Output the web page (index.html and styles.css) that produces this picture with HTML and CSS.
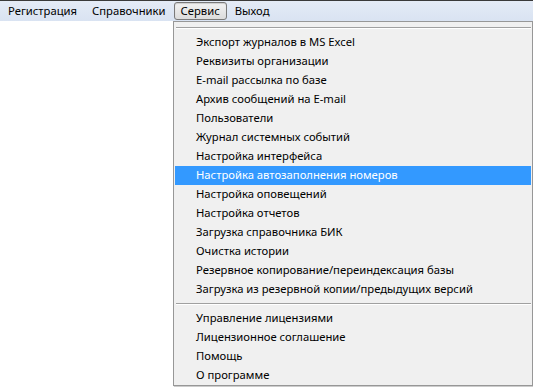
FILE: index.html
```html
<!DOCTYPE html>
<html lang="ru">
<head>
    <meta charset="UTF-8">
    <title>Сервис</title>
    <link rel="stylesheet" href="styles.css">
</head>
<body>
    <div class="menubar">
        <span class="menu-item">Регистрация</span>
        <span class="menu-item">Справочники</span>
        <span class="menu-item active">Сервис</span>
        <span class="menu-item">Выход</span>
    </div>

    <div class="dropdown">
        <div class="sep top"></div>
        <div class="row">Экспорт журналов в MS Excel</div>
        <div class="row">Реквизиты организации</div>
        <div class="row">E-mail рассылка по базе</div>
        <div class="row">Архив сообщений на E-mail</div>
        <div class="row">Пользователи</div>
        <div class="row">Журнал системных событий</div>
        <div class="row">Настройка интерфейса</div>
        <div class="row selected">Настройка автозаполнения номеров</div>
        <div class="row">Настройка оповещений</div>
        <div class="row">Настройка отчетов</div>
        <div class="row">Загрузка справочника БИК</div>
        <div class="row">Очистка истории</div>
        <div class="row">Резервное копирование/переиндексация базы</div>
        <div class="row">Загрузка из резервной копии/предыдущих версий</div>
        <div class="sep"></div>
        <div class="row">Управление лицензиями</div>
        <div class="row">Лицензионное соглашение</div>
        <div class="row">Помощь</div>
        <div class="row">О программе</div>
    </div>
</body>
</html>
```

FILE: styles.css
```css
body {
    margin: 0;
    font-family: 'Noto Sans', 'Open Sans', sans-serif;
    font-size: 11.25px;
    color: #000;
    background: #fff;
    width: 533px;
    height: 387px;
    overflow: hidden;
}
.menubar {
    display: flex;
    align-items: center;
    height: 20px;
    padding-left: 1px;
    border-top: 1px solid #3a3a3a;
    background: linear-gradient(#e4ebf6, #d9e3f2);
}
.menu-item {
    padding: 0 6px;
    line-height: 16px;
    border: 1px solid transparent;
    border-radius: 3px;
    margin-right: 1px;
}
.menu-item.active {
    border-color: #7a7a7a;
    background: linear-gradient(#f2f2f2, #dcdcdc);
    box-shadow: inset 0 1px 1px rgba(0, 0, 0, 0.15);
}
.dropdown {
    margin-left: 173px;
    width: 356px;
    padding: 5px 1px 0 1px;
    border: 1px solid #979797;
    background: #f0f0f0;
    box-shadow: 1px 1px 1px rgba(0, 0, 0, 0.2);
}
.sep {
    height: 0;
    margin: 4px 0 4px 1px;
    border-top: 1px solid #a0a0a0;
    border-bottom: 1px solid #fff;
}
.sep.top {
    margin: 0 0 4px 1px;
}
.row {
    height: 19px;
    line-height: 18px;
    padding-left: 21px;
    white-space: nowrap;
}
.row.selected {
    background: #3399ff;
    color: #fff;
}
```
